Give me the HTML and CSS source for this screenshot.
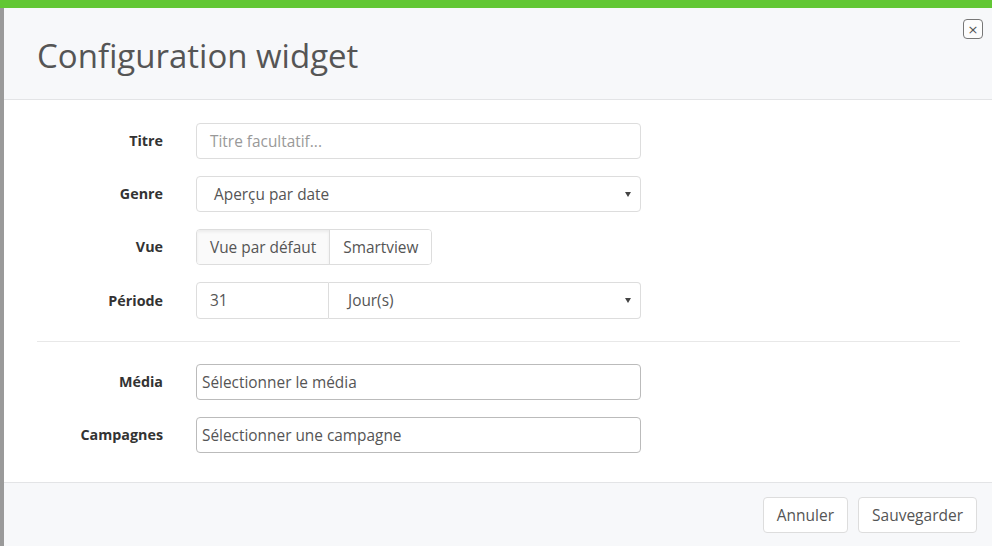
FILE: index.html
```html
<!DOCTYPE html>
<html lang="fr">
<head>
<meta charset="utf-8">
<link rel="stylesheet" href="styles.css">
</head>
<body>
<div class="page">
  <div class="backdrop"></div>
  <div class="modal">
    <div class="modal-header">
      <h1 class="modal-title">Configuration widget</h1>
      <button class="close" type="button">×</button>
    </div>
    <div class="modal-body">
      <div class="form-row">
        <label class="label">Titre</label>
        <div class="control"><div class="input placeholder">Titre facultatif...</div></div>
      </div>
      <div class="form-row">
        <label class="label">Genre</label>
        <div class="control"><div class="input select">Aperçu par date<span class="caret"></span></div></div>
      </div>
      <div class="form-row">
        <label class="label">Vue</label>
        <div class="control">
          <div class="btn-group">
            <span class="seg active">Vue par défaut</span><span class="seg">Smartview</span>
          </div>
        </div>
      </div>
      <div class="form-row">
        <label class="label">Période</label>
        <div class="control">
          <div class="input-group">
            <div class="input num">31</div>
            <div class="input select unit">Jour(s)<span class="caret"></span></div>
          </div>
        </div>
      </div>
      <hr class="sep">
      <div class="form-row">
        <label class="label">Média</label>
        <div class="control"><div class="input chooser">Sélectionner le média</div></div>
      </div>
      <div class="form-row">
        <label class="label">Campagnes</label>
        <div class="control"><div class="input chooser">Sélectionner une campagne</div></div>
      </div>
    </div>
    <div class="modal-footer">
      <button class="btn" type="button">Annuler</button>
      <button class="btn" type="button">Sauvegarder</button>
    </div>
  </div>
</div>
</body>
</html>
```
FILE: styles.css
```css
* { box-sizing: border-box; }
html, body { margin: 0; padding: 0; }
body {
  font-family: "Open Sans", "Noto Sans", sans-serif;
  font-size: 14px;
  color: #555;
  background: #fff;
  overflow: hidden;
}
.page {
  width: 992px;
  height: 546px;
  display: flex;
  position: relative;
  border-top: 8px solid #62c734;
}
.backdrop {
  width: 4px;
  flex: none;
  background: #9a9a9a;
}
.modal {
  flex: 1;
  display: flex;
  flex-direction: column;
  background: #fff;
}
.modal-header {
  position: relative;
  height: 92px;
  background: #f7f8fa;
  border-bottom: 1px solid #e3e4e6;
  padding: 25px 33px 0;
}
.modal-title {
  margin: 0;
  font-weight: 400;
  font-size: 33px;
  line-height: 45px;
  color: #555;
}
.close {
  position: absolute;
  top: 11px;
  right: 9px;
  width: 20px;
  height: 20px;
  padding: 0;
  border: 1px solid #777;
  border-radius: 4px;
  background: #fdfdfd;
  color: #555;
  font-family: "DejaVu Sans", sans-serif;
  font-size: 13px;
  line-height: 17px;
  text-align: center;
}
.modal-body {
  flex: 1;
  padding: 23px 32px 0 33px;
}
.form-row {
  display: grid;
  grid-template-columns: 126px 445px;
  column-gap: 33px;
  align-items: center;
  margin-bottom: 17px;
}
.label {
  text-align: right;
  font-weight: 700;
  color: #333;
  font-size: 14.3px;
  margin-top: -1px;
}
.input {
  height: 36px;
  border: 1px solid #ddd;
  border-radius: 4px;
  background: #fff;
  padding: 0 13px;
  display: flex;
  align-items: center;
  color: #555;
  font-size: 15.4px;
  position: relative;
}
.placeholder { color: #999; }
.select { padding-left: 17px; }
.caret {
  position: absolute;
  right: 9px;
  top: 15px;
  width: 0;
  height: 0;
  border-left: 3px solid transparent;
  border-right: 3px solid transparent;
  border-top: 5px solid #444;
}
.btn-group {
  display: inline-flex;
  height: 36px;
  border: 1px solid #ddd;
  border-radius: 4px;
  overflow: hidden;
  font-size: 15.4px;
}
.seg {
  display: flex;
  align-items: center;
  padding: 0 13px;
  color: #555;
  background: #fff;
}
.seg + .seg { border-left: 1px solid #ddd; }
.seg.active {
  background: #fafafa;
  box-shadow: inset 0 2px 3px rgba(0,0,0,0.06);
}
.input-group { display: flex; height: 37px; }
.input-group .input { height: 37px; }
.num {
  width: 133px;
  border-radius: 4px 0 0 4px;
}
.unit {
  flex: 1;
  border-left: none;
  border-radius: 0 4px 4px 0;
  padding-left: 19px;
}
.unit::before {
  content: "";
  position: absolute;
  left: -1px;
  top: 0;
  bottom: 0;
  border-left: 1px solid #ddd;
}
.chooser {
  padding-left: 5px;
  border-color: #bbb;
}
.sep {
  border: 0;
  border-top: 1px solid #e8e8e8;
  margin: 22px 0 22px;
}
.modal-footer {
  height: 64px;
  background: #f7f8fa;
  border-top: 1px solid #e3e4e6;
  display: flex;
  justify-content: flex-end;
  align-items: center;
  gap: 10px;
  padding: 0 15px 0 0;
}
.btn {
  height: 36px;
  padding: 0 13px;
  border: 1px solid #ddd;
  border-radius: 4px;
  background: #fff;
  color: #555;
  font-family: "Open Sans", sans-serif;
  font-size: 15.5px;
}
```
